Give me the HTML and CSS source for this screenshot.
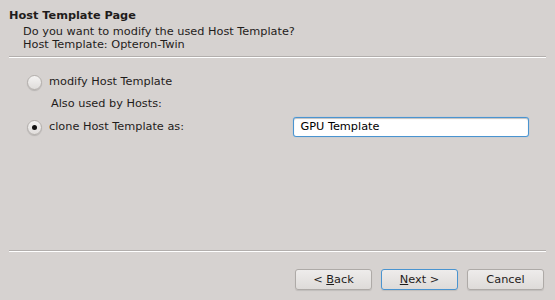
FILE: index.html
```html
<!DOCTYPE html>
<html>
<head>
<meta charset="utf-8">
<link rel="stylesheet" href="styles.css">
</head>
<body>
<div class="page">
  <div class="header">
    <div class="title">Host Template Page</div>
    <div class="subtitle">Do you want to modify the used Host Template?</div>
    <div class="subtitle">Host Template: Opteron-Twin</div>
  </div>
  <div class="sep"></div>
  <div class="content">
    <div class="row row-first">
      <span class="radio"></span>
      <span class="label">modify Host Template</span>
    </div>
    <div class="row row-note">
      <span class="note">Also used by Hosts:</span>
    </div>
    <div class="row row-clone">
      <span class="radio checked"></span>
      <span class="label label-wide">clone Host Template as:</span>
      <div class="field">GPU Template</div>
    </div>
  </div>
  <div class="spacer"></div>
  <div class="sep"></div>
  <div class="buttons">
    <div class="btn">&lt; <u>B</u>ack</div>
    <div class="btn btn-default"><u>N</u>ext &gt;</div>
    <div class="btn">Cancel</div>
  </div>
</div>
</body>
</html>
```
FILE: styles.css
```css
html, body {
  margin: 0;
  padding: 0;
  background: #d6d2d0;
}
body {
  font-family: "DejaVu Sans", "Liberation Sans", sans-serif;
  font-size: 11.3px;
  color: #1f1c1b;
}
.page {
  height: 300px;
  display: flex;
  flex-direction: column;
}
.header {
  padding: 7px 9px 0 9px;
}
.title {
  font-weight: bold;
  line-height: 18px;
}
.subtitle {
  padding-left: 14px;
  line-height: 13px;
}
.sep {
  margin: 5px 9px 0 9px;
  height: 1px;
  background: #b3afad;
  border-bottom: 1px solid #ffffff;
  flex: none;
}
.content {
  padding: 14px 26px 0 26px;
  display: flex;
  flex-direction: column;
}
.row {
  display: flex;
  align-items: center;
  height: 20px;
  line-height: 20px;
}
.row-note {
  margin-top: 2px;
  padding-left: 25px;
}
.row-clone {
  margin-top: 3px;
}
.radio {
  width: 13px;
  height: 13px;
  border-radius: 50%;
  border: 1px solid #b3afac;
  background: linear-gradient(#f4f3f2, #e0dddb);
  box-shadow: 0 1px 1px rgba(0,0,0,0.15);
  margin-left: 1px;
  position: relative;
  flex: none;
}
.radio.checked::after {
  content: "";
  position: absolute;
  left: 4px;
  top: 4px;
  width: 5px;
  height: 5px;
  border-radius: 50%;
  background: #111;
}
.label {
  margin-left: 7px;
}
.label-wide {
  width: 245px;
}
.field {
  width: 228px;
  height: 18px;
  line-height: 18px;
  border: 1px solid #4a94d0;
  border-radius: 3px;
  background: #ffffff;
  padding-left: 6px;
  box-shadow: inset 0 1px 1px rgba(0,0,0,0.25), 0 0 1px #6fb0e3;
  color: #000;
}
.spacer {
  flex: 1;
}
.buttons {
  display: flex;
  justify-content: flex-end;
  gap: 9px;
  padding-right: 11px;
  margin-top: 17px;
  margin-bottom: 10px;
}
.btn {
  width: 75px;
  height: 19px;
  line-height: 19px;
  text-align: center;
  border: 1px solid #aeaaa7;
  border-radius: 3px;
  background: linear-gradient(#eeeceb, #dedbd9);
  box-shadow: 0 1px 1px rgba(0,0,0,0.1);
}
.btn-default {
  border-color: #4a94d0;
}
.btn u {
  text-decoration: underline;
  text-underline-offset: 1px;
}
```
